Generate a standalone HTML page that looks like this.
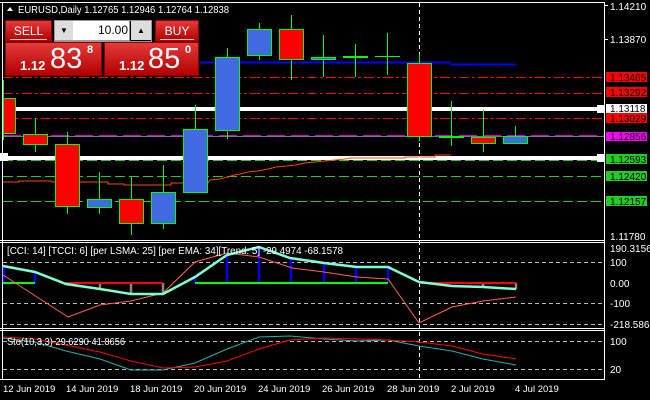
<!DOCTYPE html>
<html><head><meta charset="utf-8"><style>
body{margin:0;background:#000;width:650px;height:400px;overflow:hidden;font-family:"Liberation Sans",sans-serif}
svg{position:absolute;left:0;top:0}
.tp{position:absolute;font-family:"Liberation Sans",sans-serif;color:#fff}
.rb{background:linear-gradient(#e43a3a,#b20000);border:1px solid #8a0000;box-sizing:border-box}
</style></head><body>
<svg width="650" height="400" font-family="Liberation Sans, sans-serif" font-size="10">
<g stroke="#fff" fill="none" stroke-width="1">
<line x1="0" y1="2.5" x2="605" y2="2.5"/>
<line x1="604.5" y1="2" x2="604.5" y2="380"/>
<line x1="2.5" y1="2" x2="2.5" y2="380"/>
<line x1="0" y1="240.5" x2="605" y2="240.5"/>
<line x1="0" y1="242.5" x2="605" y2="242.5"/>
<line x1="0" y1="328.5" x2="605" y2="328.5"/>
<line x1="0" y1="330.5" x2="605" y2="330.5"/>
<line x1="0" y1="379.5" x2="605" y2="379.5"/>
</g>
<line x1="200" y1="62.5" x2="450" y2="62.5" stroke="#0000ff" stroke-width="2"/>
<line x1="450" y1="64.5" x2="516" y2="64.5" stroke="#0000ff" stroke-width="2"/>
<g stroke="#f00" stroke-dasharray="10,3,3,3">
<line x1="3" y1="77.5" x2="604" y2="77.5"/><line x1="3" y1="93.5" x2="604" y2="93.5"/><line x1="3" y1="118.5" x2="604" y2="118.5"/>
</g>
<rect x="3" y="107" width="597" height="4" fill="#fff"/>
<rect x="3" y="156" width="597" height="4" fill="#fff"/>
<line x1="3" y1="135.5" x2="604" y2="135.5" stroke="#c0c" stroke-dasharray="18,6"/>
<line x1="3" y1="136.5" x2="604" y2="136.5" stroke="#778"/>
<g stroke="#2c2" stroke-dasharray="10,4">
<line x1="3" y1="160.5" x2="604" y2="160.5"/><line x1="3" y1="176.5" x2="604" y2="176.5"/><line x1="3" y1="201.5" x2="604" y2="201.5"/>
</g>
<polyline fill="none" stroke="#ff4500" points="3,182 19,182 19,181 52,181 52,182 108,182 108,184 124,184 124,185 171,185 171,183 208,183 210,180 220,179 228,177 234,175 240,174 248,172 258,171 268,169 276,167 287,166 295,165 305,163 315,162 325,161 335,160 345,159 350,158 405,158 405,157 435,157 435,155 451,155"/>
<line x1="419.5" y1="3" x2="419.5" y2="380" stroke="#fff" stroke-dasharray="4,3"/>
<g stroke="#0f0" stroke-width="1">
<line x1="3.5" y1="80" x2="3.5" y2="140"/>
<line x1="35.5" y1="118" x2="35.5" y2="152"/>
<line x1="67.5" y1="132" x2="67.5" y2="214"/>
<line x1="99.5" y1="172" x2="99.5" y2="214"/>
<line x1="131.5" y1="176" x2="131.5" y2="235"/>
<line x1="163.5" y1="165" x2="163.5" y2="229"/>
<line x1="195.5" y1="105" x2="195.5" y2="192"/>
<line x1="227.5" y1="48" x2="227.5" y2="139"/>
<line x1="259.5" y1="23" x2="259.5" y2="60"/>
<line x1="291.5" y1="15" x2="291.5" y2="80"/>
<line x1="323.5" y1="35" x2="323.5" y2="77"/>
<line x1="355.5" y1="44" x2="355.5" y2="77"/>
<line x1="387.5" y1="33" x2="387.5" y2="75"/>
<line x1="419.5" y1="54" x2="419.5" y2="141"/>
<line x1="451.5" y1="101" x2="451.5" y2="146"/>
<line x1="483.5" y1="110" x2="483.5" y2="152"/>
<line x1="515.5" y1="126" x2="515.5" y2="136"/>
<rect x="3.5" y="98.5" width="12" height="35" fill="#f00"/>
<rect x="23.5" y="134.5" width="24" height="10" fill="#f00"/>
<rect x="55.5" y="144.5" width="24" height="62" fill="#f00"/>
<rect x="87.5" y="199.5" width="24" height="8" fill="#4169e1"/>
<rect x="119.5" y="199.5" width="24" height="24" fill="#f00"/>
<rect x="151.5" y="192.5" width="24" height="31" fill="#4169e1"/>
<rect x="183.5" y="129.5" width="24" height="63" fill="#4169e1"/>
<rect x="215.5" y="57.5" width="24" height="73" fill="#4169e1"/>
<rect x="247.5" y="29.5" width="24" height="26" fill="#4169e1"/>
<rect x="279.5" y="29.5" width="24" height="30" fill="#f00"/>
<rect x="311.5" y="57.5" width="24" height="2" fill="#4169e1"/>
<line x1="343" y1="57" x2="368" y2="57" stroke-width="2"/>
<line x1="375" y1="56.5" x2="400" y2="56.5"/>
<rect x="407.5" y="63.5" width="24" height="73" fill="#f00"/>
<line x1="439" y1="137" x2="464" y2="137" stroke-width="2"/>
<rect x="471.5" y="137.5" width="24" height="6" fill="#f00"/>
<rect x="503.5" y="136.5" width="24" height="7" fill="#4169e1"/>
</g>
<g fill="#fff">
<text x="610" y="10">1.14210</text><text x="610" y="43">1.13870</text><text x="610" y="240">1.11780</text>
<rect x="604" y="5" width="4" height="1"/><rect x="604" y="39" width="4" height="1"/>
</g>
<rect x="606" y="72" width="41" height="10" fill="#f00"/>
<rect x="606" y="87" width="41" height="10" fill="#f00"/>
<rect x="606" y="104" width="41" height="9" fill="#fff"/><text x="610" y="112" fill="#000">1.13118</text>
<rect x="597" y="105" width="8" height="8" fill="#fff"/><rect x="597" y="154" width="8" height="8" fill="#fff"/>
<rect x="0" y="153" width="8" height="8" fill="#fff"/>
<rect x="606" y="113" width="41" height="10" fill="#f00"/>
<rect x="606" y="132" width="41" height="9" fill="#f0f"/>
<rect x="606" y="154" width="41" height="10" fill="#2c2"/>
<rect x="606" y="171" width="41" height="10" fill="#2c2"/>
<rect x="606" y="196" width="41" height="10" fill="#2c2"/>
<g fill="#000"><text x="610" y="81">1.13465</text><text x="610" y="96">1.13292</text><text x="610" y="122">1.13029</text><text x="610" y="140">1.12856</text><text x="610" y="163">1.12593</text><text x="610" y="180">1.12420</text><text x="610" y="205">1.12157</text></g>
<g stroke="#bbb" stroke-dasharray="4,3">
<line x1="3" y1="262.5" x2="604" y2="262.5"/><line x1="3" y1="303.5" x2="604" y2="303.5"/><line x1="3" y1="324.5" x2="604" y2="324.5"/>
<line x1="3" y1="341.5" x2="604" y2="341.5"/><line x1="3" y1="369.5" x2="604" y2="369.5"/>
</g>
<g stroke="#00f" stroke-width="2.5">
<line x1="4" y1="283" x2="4" y2="266"/><line x1="35" y1="283" x2="35" y2="272"/><line x1="195" y1="283" x2="195" y2="277"/>
<line x1="227" y1="283" x2="227" y2="255"/><line x1="259" y1="283" x2="259" y2="247"/><line x1="291" y1="283" x2="291" y2="258"/>
<line x1="324" y1="283" x2="324" y2="263"/><line x1="356" y1="283" x2="356" y2="267"/><line x1="388" y1="283" x2="388" y2="267"/>
</g>
<g stroke="#888" stroke-width="2.5">
<line x1="100" y1="283" x2="100" y2="289"/><line x1="131" y1="283" x2="131" y2="294"/><line x1="163" y1="283" x2="163" y2="294"/>
<line x1="483" y1="283" x2="483" y2="287"/><line x1="516" y1="283" x2="516" y2="289"/>
</g>
<g stroke-width="2">
<line x1="3" y1="283" x2="35" y2="283" stroke="#0f0"/><line x1="195" y1="283" x2="388" y2="283" stroke="#0f0"/>
<line x1="66" y1="283" x2="163" y2="283" stroke="#f00"/><line x1="419" y1="283" x2="516" y2="283" stroke="#f00"/>
</g>
<polyline fill="none" stroke="#ff6347" points="3,275 68,317 100,305 131,301 163,293 195,262 227,253 259,257 292,268 324,272 357,277 388,279 419,323 452,307 483,301 516,297"/>
<polyline fill="none" stroke="#7fffd4" stroke-width="2.5" points="3,266 35,272 66,284 100,289 131,294 163,294 195,277 227,255 259,247 290,258 324,263 357,267 388,267 419,282 452,286 483,287 516,289"/>
<text x="7" y="254" fill="#fff" textLength="336" lengthAdjust="spacingAndGlyphs">[CCI: 14] [TCCI: 6] [per LSMA: 25] [per EMA: 34][Trend: 5] -29.4974 -68.1578</text>
<g fill="#fff">
<text x="610" y="252">190.3156</text><text x="610" y="266">100</text><text x="610" y="287">0.00</text><text x="610" y="307">-100</text><text x="610" y="328">-218.5865</text>
<text x="610" y="345">100</text><text x="610" y="373">20</text>
</g>
<polyline fill="none" stroke="#20b2aa" points="3,338 35,342 66,351 100,359 131,370 163,370 195,363 227,349 259,337 290,336 324,339 357,341 388,340 419,346 452,351 483,359 516,365"/>
<polyline fill="none" stroke="#f00" points="3,337 35,339 66,345 100,352 131,361 163,368 195,367 227,361 259,349 290,340 324,338 357,339 388,340 419,342 452,346 483,354 516,359"/>
<text x="7" y="345" fill="#fff" textLength="118" lengthAdjust="spacingAndGlyphs">Sto(10,3,3) 29.6290 41.8656</text>
<g fill="#fff" font-size="9.5">
<text x="3" y="392">12 Jun 2019</text><text x="66" y="392">14 Jun 2019</text><text x="130" y="392">18 Jun 2019</text>
<text x="194" y="392">20 Jun 2019</text><text x="258" y="392">24 Jun 2019</text><text x="322" y="392">26 Jun 2019</text>
<text x="387" y="392">28 Jun 2019</text><text x="451" y="392">2 Jul 2019</text><text x="515" y="392">4 Jul 2019</text>
</g>
<text x="18" y="13" fill="#fff" textLength="211" lengthAdjust="spacingAndGlyphs">EURUSD,Daily  1.12765 1.12946 1.12764 1.12838</text>
<polygon points="7,11 10,7 13,11" fill="#fff"/>
</svg>
<div class="tp rb" style="left:5px;top:20px;width:47px;height:22px;font-size:12px;text-align:center;line-height:20px">SELL<div style="position:absolute;left:4px;right:4px;bottom:1px;height:1px;background:#fcc"></div></div>
<div class="tp" style="left:54px;top:20px;width:76px;height:21px;background:#fff;border:1px solid #999;box-sizing:border-box"></div>
<div class="tp" style="left:55px;top:21px;width:18px;height:19px;background:#ddd;color:#000;font-size:8px;text-align:center;line-height:19px">▼</div>
<div class="tp" style="left:131px;top:21px;width:20px;height:19px;background:#ddd;color:#000;font-size:8px;text-align:center;line-height:19px">▲</div>
<div class="tp" style="left:74px;top:21px;width:54px;height:19px;color:#000;font-size:12px;text-align:right;line-height:19px">10.00</div>
<div class="tp" style="left:54px;top:20px;width:98px;height:22px;border:1px solid #999;box-sizing:border-box"></div>
<div class="tp rb" style="left:155px;top:20px;width:44px;height:22px;font-size:12px;text-align:center;line-height:20px">BUY<div style="position:absolute;left:4px;right:4px;bottom:1px;height:1px;background:#fcc"></div></div>
<div class="tp rb" style="left:5px;top:42px;width:97px;height:34px"><span style="position:absolute;left:14px;top:15px;font-size:13px;font-weight:bold">1.12</span><span style="position:absolute;left:44px;top:0px;font-size:29px">83</span><span style="position:absolute;left:81px;top:1px;font-size:11px;font-weight:bold">8</span></div>
<div class="tp rb" style="left:104px;top:42px;width:95px;height:34px"><span style="position:absolute;left:14px;top:15px;font-size:13px;font-weight:bold">1.12</span><span style="position:absolute;left:43px;top:0px;font-size:29px">85</span><span style="position:absolute;left:80px;top:1px;font-size:11px;font-weight:bold">0</span></div>
</body></html>
